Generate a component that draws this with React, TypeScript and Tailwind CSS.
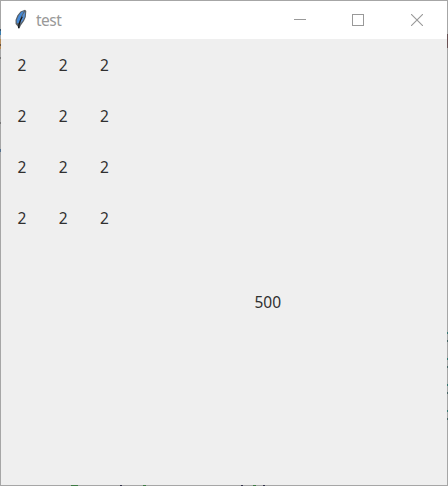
const rows = [
  ["2", "2", "2"],
  ["2", "2", "2"],
  ["2", "2", "2"],
  ["2", "2", "2"],
];

function FeatherIcon() {
  return (
    <svg width="14" height="22" viewBox="0 0 14 22" className="shrink-0">
      <path d="M11 0.8 L12.3 2 L11.8 8 L10 12 L6.8 16.6 L5.4 19.5 L4.2 19.5 L3.8 17.5 L1.6 15 L1.5 11 L3.3 6.5 L6.5 2.5 Z" fill="#596066" />
      <path d="M10 2 L7.2 7.2 L5 13.4 L2.9 14.6 L2.7 11.3 L4.7 6.5 L7.3 3.2 Z" fill="#4489d8" />
      <path d="M11.2 2.4 L10.7 8 L9 11.6 L6.3 14.8 L7.2 10.5 L9 5.5 Z" fill="#5b92d4" />
      <path d="M8.3 7.8 L6.4 11.6 L5 15.6 L4.7 19" fill="none" stroke="#101418" strokeWidth="1.2" />
    </svg>
  );
}

function TitleBar() {
  return (
    <header className="flex h-[38px] shrink-0 items-center bg-white">
      <div className="ml-[13px] flex h-full items-start pt-[7.5px]">
        <FeatherIcon />
      </div>
      <h1 className="ml-[8px] grow text-[15.5px] leading-5 font-normal tracking-[-0.5px] text-[#999999]">test</h1>
      <div className="flex h-full text-[#999999]">
        <button aria-label="Minimize" className="flex w-[58px] items-center justify-center">
          <svg width="12" height="12" shapeRendering="crispEdges"><path d="M0 5.5H12" stroke="currentColor" /></svg>
        </button>
        <button aria-label="Maximize" className="flex w-[58px] items-center justify-center">
          <svg width="12" height="12" shapeRendering="crispEdges"><rect x="0.5" y="0.5" width="11" height="11" fill="none" stroke="currentColor" /></svg>
        </button>
        <button aria-label="Close" className="flex w-[60px] items-center justify-center">
          <svg width="12" height="12"><path d="M0 0L12 12M12 0L0 12" stroke="currentColor" strokeWidth="1.1" /></svg>
        </button>
      </div>
    </header>
  );
}

// Traces of the desktop showing through the translucent window frame.
function FrameTraces() {
  return (
    <svg width="448" height="486" className="pointer-events-none absolute -top-px -left-px" shapeRendering="crispEdges">
      <path d="M0 29h1v2h-1z" fill="#34536e" />
      <path d="M0 31h1v4h-1z" fill="#3b7eae" />
      <path d="M0 39h1v5h-1zM0 46h1v3h-1z" fill="#b78b58" />
      <path d="M0 44h1v2h-1z" fill="#68513e" />
      <path d="M0 57h1v2h-1zM0 122h1v2h-1z" fill="#777777" />
      <path d="M0 149h1v3h-1z" fill="#52708e" />
      <path d="M447 34h1v14h-1z" fill="#685053" />
      <path d="M447 332h1v2h-1zM447 358h1v2h-1zM447 384h1v2h-1zM447 410h1v2h-1z" fill="#367771" />
      <path d="M447 340h1v2h-1zM447 366h1v2h-1zM447 392h1v2h-1zM447 418h1v2h-1z" fill="#476463" />
      <path d="M71 485h7v1h-7zM143 485h3v1h-3zM253 485h3v1h-3z" fill="#3d7943" />
      <path d="M120 485h2v1h-2zM241 485h2v1h-2zM263 485h2v1h-2z" fill="#303047" />
    </svg>
  );
}

export default function App() {
  return (
    <div className="relative flex h-[486px] w-[448px] flex-col border border-[#a6a6a6] bg-[#efefef] font-['Noto_Sans','Open_Sans',sans-serif]">
      <TitleBar />
      <main className="flex flex-col text-[15.5px] leading-5 text-[#303030]">
        <div className="mt-4 ml-[16.5px] grid w-max grid-cols-[repeat(3,9px)] gap-x-[32.3px] gap-y-[31px]">
          {rows.flatMap((row, r) => row.map((value, c) => <span key={`${r}-${c}`}>{value}</span>))}
        </div>
        <div className="mt-16 ml-[253.5px]">500</div>
      </main>
      <FrameTraces />
    </div>
  );
}
